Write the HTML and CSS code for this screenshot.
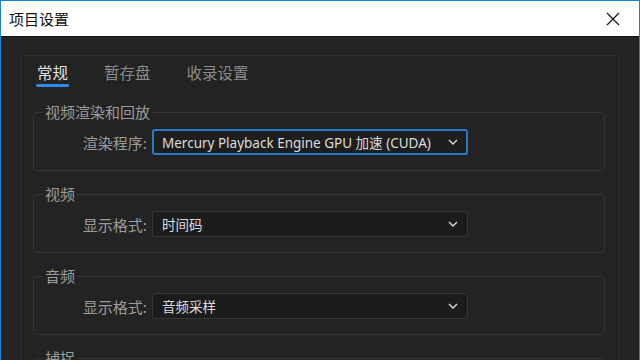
FILE: index.html
```html
<!doctype html>

<html>

<head>
    <meta charset="utf-8">
    <title>项目设置</title>
    <link rel="stylesheet" href="styles.css">
</head>

<body>

    <div class="dialog">
        <header class="titlebar">
            <h1>项目设置</h1>
            <svg class="close" width="14" height="14" viewBox="0 0 14 14">
                <path d="M1 1L13 13M13 1L1 13" stroke="#111" stroke-width="1.2" fill="none" />
            </svg>
        </header>

        <div class="content">
            <div class="panel">
                <ul class="tabs">
                    <li class="tab active">常规</li>
                    <li class="tab">暂存盘</li>
                    <li class="tab">收录设置</li>
                </ul>

                <fieldset class="group">
                    <legend>视频渲染和回放</legend>
                    <div class="field">
                        <label>渲染程序:</label>
                        <div class="select focused">
                            <span>Mercury Playback Engine GPU 加速 (CUDA)</span>
                            <svg class="chevron" width="10" height="6" viewBox="0 0 10 6">
                                <path d="M1 1L5 5L9 1" stroke="#ddd" stroke-width="1.4" fill="none" />
                            </svg>
                        </div>
                    </div>
                </fieldset>

                <fieldset class="group">
                    <legend>视频</legend>
                    <div class="field">
                        <label>显示格式:</label>
                        <div class="select">
                            <span>时间码</span>
                            <svg class="chevron" width="10" height="6" viewBox="0 0 10 6">
                                <path d="M1 1L5 5L9 1" stroke="#ddd" stroke-width="1.4" fill="none" />
                            </svg>
                        </div>
                    </div>
                </fieldset>

                <fieldset class="group">
                    <legend>音频</legend>
                    <div class="field">
                        <label>显示格式:</label>
                        <div class="select">
                            <span>音频采样</span>
                            <svg class="chevron" width="10" height="6" viewBox="0 0 10 6">
                                <path d="M1 1L5 5L9 1" stroke="#ddd" stroke-width="1.4" fill="none" />
                            </svg>
                        </div>
                    </div>
                </fieldset>

                <fieldset class="group">
                    <legend>捕捉</legend>
                    <div class="field">
                        <label>捕捉格式:</label>
                        <div class="select">
                            <span>DV</span>
                        </div>
                    </div>
                </fieldset>
            </div>
        </div>
    </div>

</body>

</html>
```

FILE: styles.css
```css
html,
body {
    margin: 0;
    height: 100%;
    overflow: hidden;
}

body {
    font-family: "Noto Sans", "Noto Sans CJK SC", sans-serif;
    background: #232323;
}

.dialog {
    height: 360px;
    box-sizing: border-box;
    border: 1px solid #1a7fd6;
    border-bottom: none;
    background: #232323;
    display: flex;
    flex-direction: column;
}

.titlebar {
    height: 35px;
    flex: none;
    background: #fff;
    border-bottom: 1px solid #161616;
    display: flex;
    align-items: center;
    justify-content: space-between;
    padding: 0 19px 0 8px;
}

.titlebar h1 {
    margin: 0;
    font-size: 15px;
    font-weight: normal;
    color: #111;
    font-family: "Noto Sans CJK SC", sans-serif;
}

.close {
    display: block;
}

.content {
    flex: 1;
    padding: 18px 19px 0 19px;
    overflow: hidden;
}

.panel {
    border: 1px solid #2f2f2f;
    border-radius: 3px;
    padding: 5px 0 0 0;
    height: 400px;
}

.tabs {
    list-style: none;
    margin: 0 0 15px 16px;
    padding: 0;
    display: flex;
    gap: 36px;
}

.tab {
    font-family: "Noto Sans CJK SC", sans-serif;
    font-size: 15.5px;
    line-height: 23px;
    color: #8c8c8c;
    padding-bottom: 3px;
}

.tab.active {
    color: #e2e2e2;
    position: relative;
}

.tab.active::after {
    content: "";
    position: absolute;
    left: -1px;
    right: -1px;
    bottom: 0;
    height: 3px;
    border-radius: 2px;
    background: #2d8ceb;
}

.group {
    border: 1px solid #353535;
    border-radius: 4px;
    margin: 0 14px 13px 12px;
    padding: 7px 0 15px 0;
    min-width: 0;
}

.group legend {
    margin-left: 9px;
    padding: 0 2px;
    font-family: "Noto Sans CJK SC", sans-serif;
    font-size: 15px;
    line-height: 20px;
    color: #9c9c9c;
}

.field {
    display: flex;
    align-items: center;
    gap: 5px;
}

.field label {
    width: 113px;
    text-align: right;
    font-family: "Noto Sans CJK SC", sans-serif;
    font-size: 15px;
    color: #9c9c9c;
}

.select {
    width: 316px;
    height: 26px;
    box-sizing: border-box;
    background: #1c1c1c;
    border: 1px solid #363636;
    border-radius: 3px;
    display: flex;
    align-items: center;
    justify-content: space-between;
    padding: 0 9px 0 9px;
    font-size: 13.5px;
    color: #dcdcdc;
}

.select.focused {
    border: 2px solid #2a78c8;
    padding: 0 8px 0 8px;
    background: #1e1e1e;
}

.chevron {
    display: block;
}
```
